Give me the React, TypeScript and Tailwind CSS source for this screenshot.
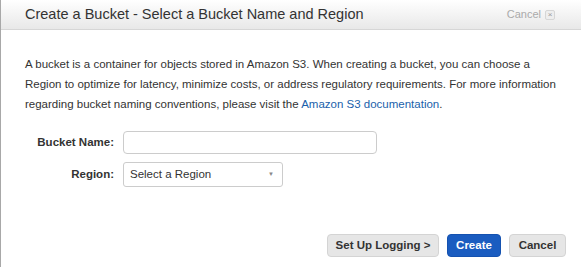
const App = () => {
  return (
    <div className="h-[267px] w-[581px] overflow-hidden bg-white font-['Liberation_Sans',Arial,sans-serif] text-[#333]">
      <div className="h-full border-l border-l-[#a8a8a8]">
        <header className="flex h-[30px] items-center justify-between border-b border-b-[#d6d6d6] bg-gradient-to-b from-white to-[#e8e8e8] pl-[24px] pr-[26px]">
          <h1 className="text-[14.5px] text-[#333]">Create a Bucket - Select a Bucket Name and Region</h1>
          <button className="flex items-center gap-[4px] text-[11px] text-[#aaa]">
            Cancel
            <span className="flex h-[10px] w-[10px] items-center justify-center rounded-[2px] border border-[#d6d6d6] bg-[#eee] text-[8px] leading-none text-[#999]">
              ×
            </span>
          </button>
        </header>

        <div className="pl-[24px] pr-4 pt-[24px]">
          <p className="whitespace-nowrap text-[11.5px] leading-[20px]">
            A bucket is a container for objects stored in Amazon S3. When creating a bucket, you can choose a
            <br />
            Region to optimize for latency, minimize costs, or address regulatory requirements. For more information
            <br />
            regarding bucket naming conventions, please visit the{' '}
            <a href="#" className="text-[#1a5fab]">Amazon S3 documentation</a>.
          </p>

          <div className="mt-[17px] flex flex-col gap-[8px]">
            <div className="flex items-center">
              <label className="w-[98px] whitespace-nowrap pr-[9px] text-right text-[11.5px] font-bold">
                Bucket Name:
              </label>
              <input
                type="text"
                className="h-[23px] w-[254px] rounded-[4px] border border-[#ccc] bg-white px-2 text-[11.5px] outline-none"
              />
            </div>
            <div className="flex items-center">
              <label className="w-[98px] whitespace-nowrap pr-[9px] text-right text-[11.5px] font-bold">
                Region:
              </label>
              <div className="flex h-[25px] w-[160px] items-center justify-between rounded-[3px] border border-[#ccc] bg-white pl-[6px] pr-[8px] text-[11.5px]">
                <span>Select a Region</span>
                <span className="text-[6px] text-[#888]">▼</span>
              </div>
            </div>
          </div>
        </div>

        <div className="mt-[47px] flex justify-end gap-[8px] pr-[15px]">
          <button className="h-[23px] w-[112px] whitespace-nowrap rounded-[4px] border border-[#d4d4d4] bg-[#e6e6e6] text-[11.5px] font-bold text-[#333]">
            Set Up Logging &gt;
          </button>
          <button className="h-[23px] w-[54px] rounded-[4px] border border-[#1552b0] bg-[#1a5cc0] text-[11.5px] font-bold text-white">
            Create
          </button>
          <button className="h-[23px] w-[57px] rounded-[4px] border border-[#d4d4d4] bg-[#e6e6e6] text-[11.5px] font-bold text-[#333]">
            Cancel
          </button>
        </div>
      </div>
    </div>
  )
}

export default App
